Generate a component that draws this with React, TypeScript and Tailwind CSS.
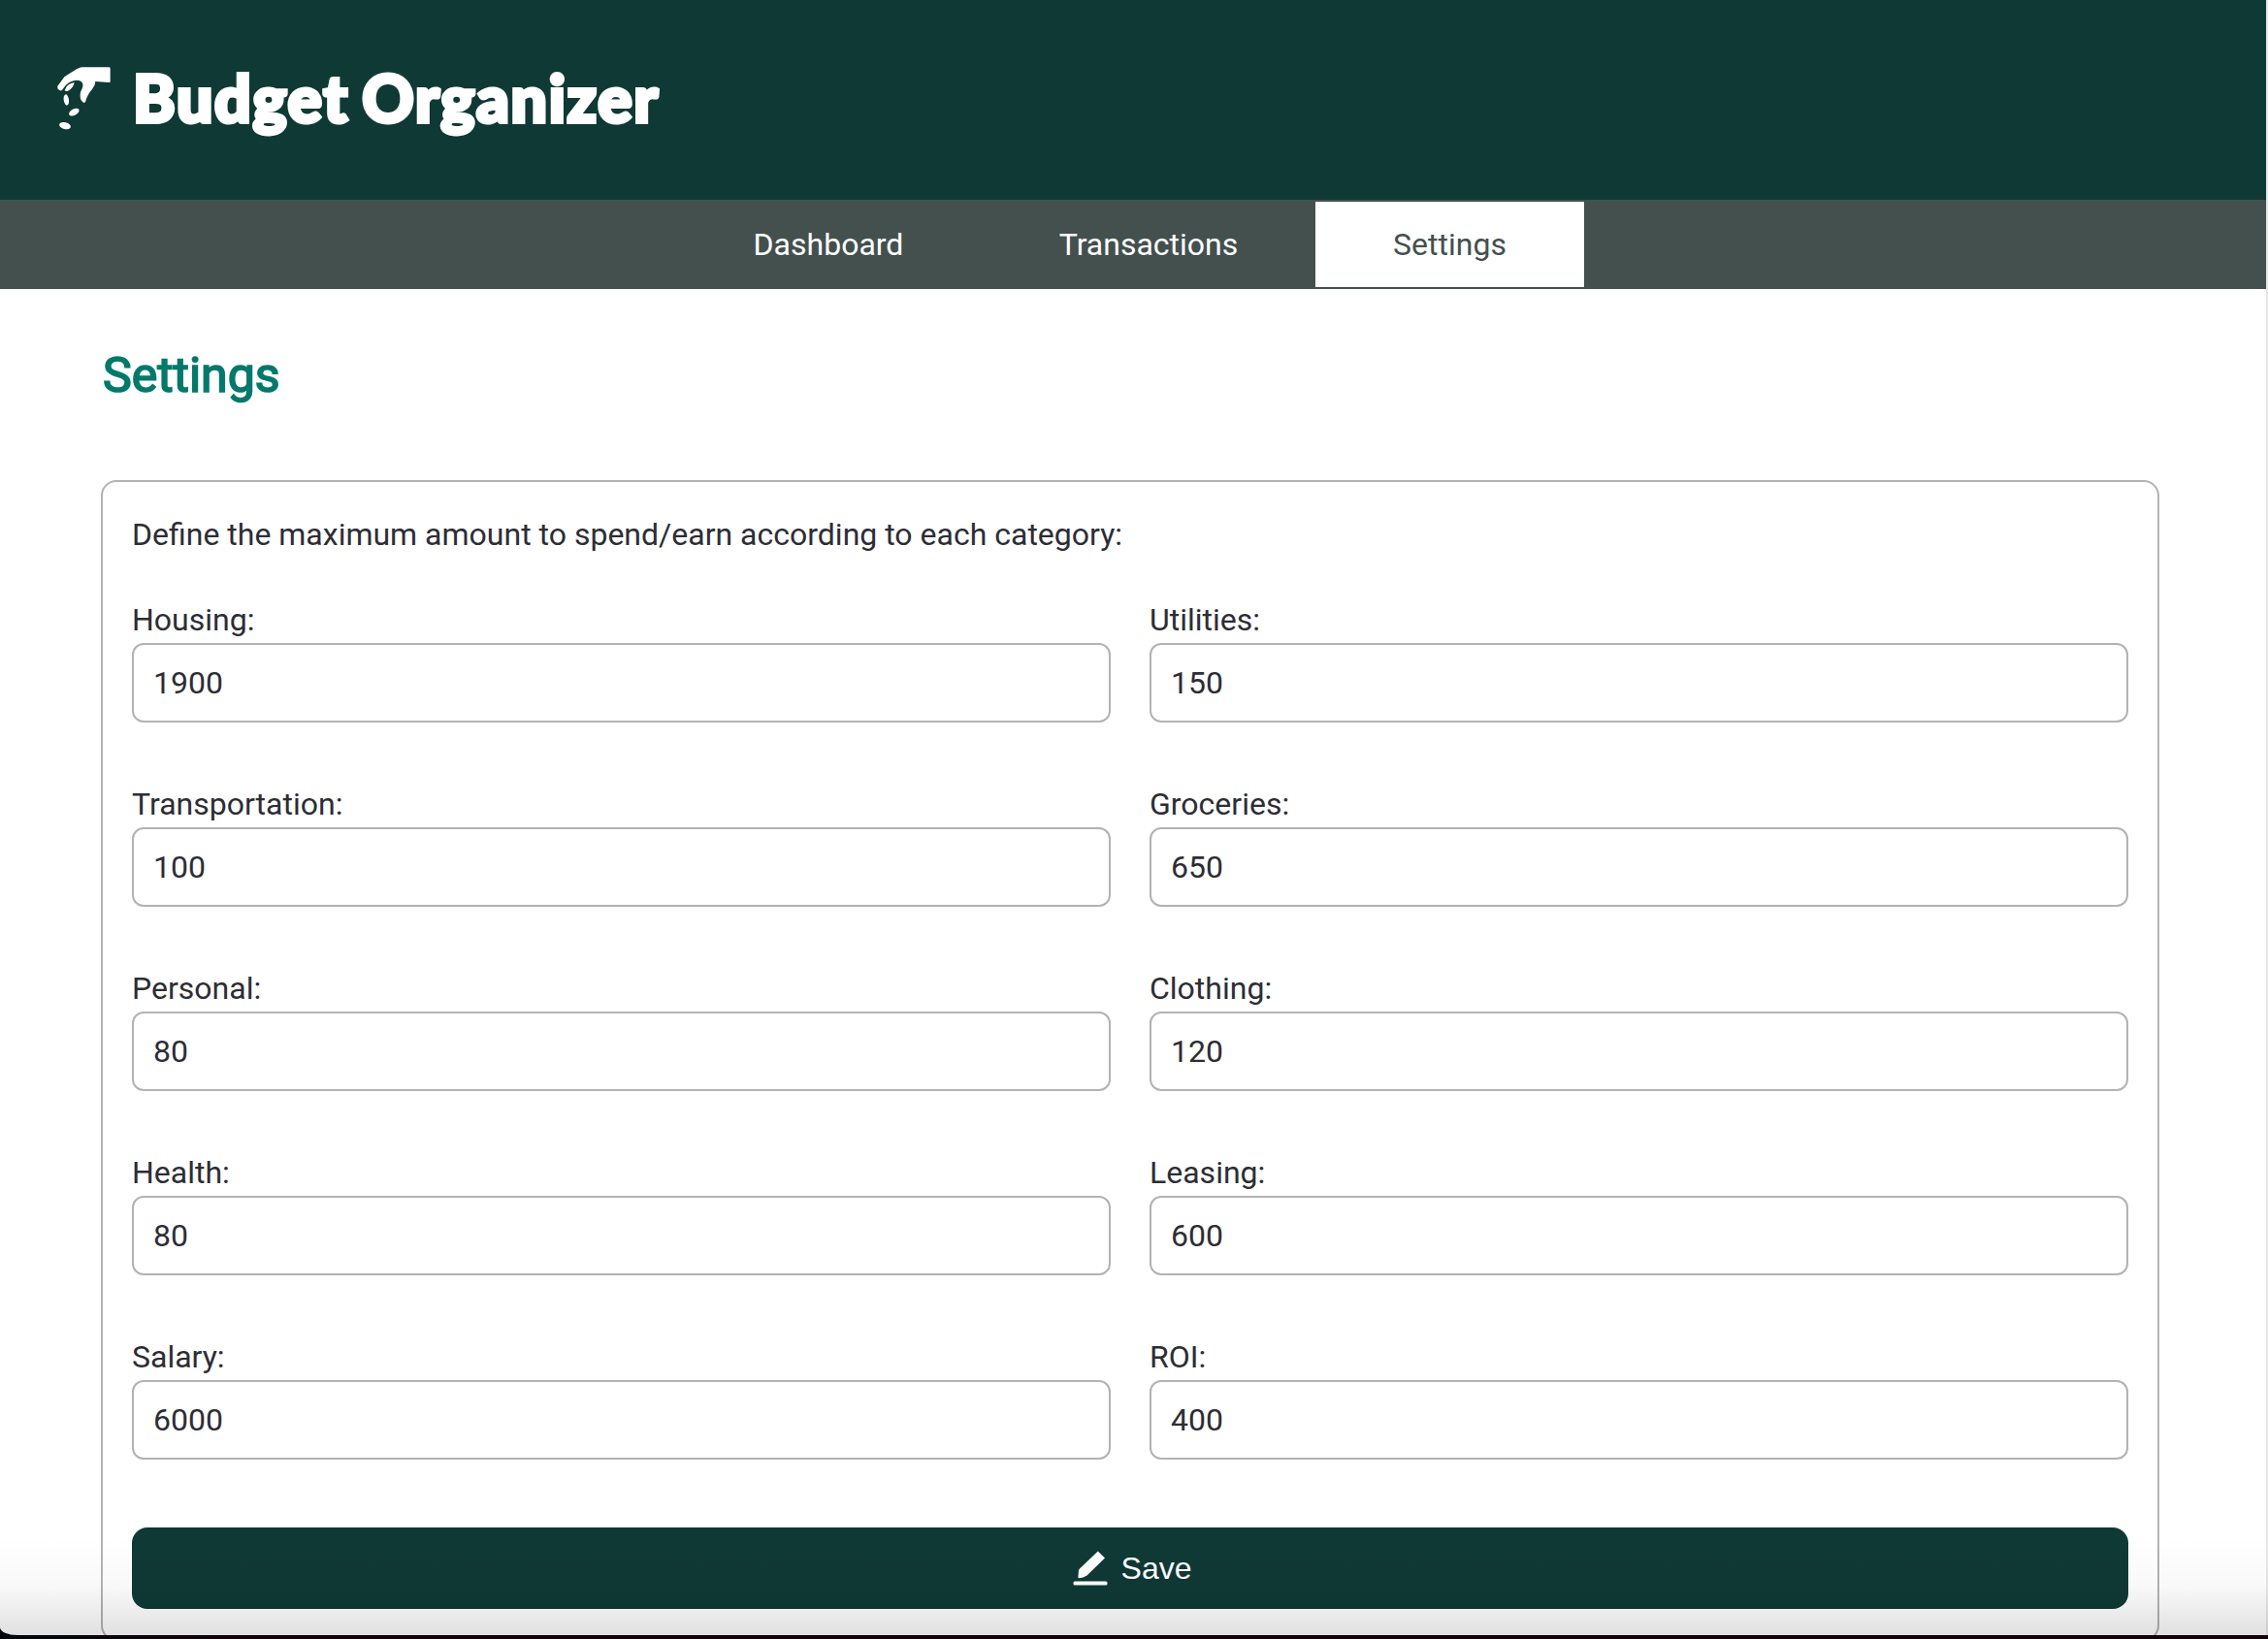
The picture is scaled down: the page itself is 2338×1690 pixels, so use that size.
import React from "react";

const tabs = [
  { label: "Dashboard", active: false, cls: "w-[316px]" },
  { label: "Transactions", active: false, cls: "w-[344px]" },
  { label: "Settings", active: true, cls: "w-[277px]" },
];

const fields: [string, string][] = [
  ["Housing", "1900"],
  ["Utilities", "150"],
  ["Transportation", "100"],
  ["Groceries", "650"],
  ["Personal", "80"],
  ["Clothing", "120"],
  ["Health", "80"],
  ["Leasing", "600"],
  ["Salary", "6000"],
  ["ROI", "400"],
];

function HandCoins() {
  return (
    <svg className="h-[66px] w-[56px] shrink-0" viewBox="0 0 168 198" fill="#fff">
      <path d="M75 1H160Q164 1 164 5V45Q164 49 160 48L118 45Q118 57 108 69Q92 87 87 109L82 111Q70 104 71 87Q71 77 77 67Q83 54 74 45Q64 39 50 43Q36 47 26 57L15 71Q8 77 1 67V59L22 31Q40 19 60 7Q68 2 75 1Z" />
      <path d="M53 48Q37 51 29 61L23 73Q27 77 33 74Q49 67 53 48Z" />
      <ellipse cx="28" cy="102" rx="8" ry="17" transform="rotate(-8 28 102)" />
      <ellipse cx="52" cy="140" rx="17" ry="9.5" transform="rotate(-27 52 140)" />
      <ellipse cx="24" cy="182" rx="18" ry="10.5" transform="rotate(13 24 182)" />
    </svg>
  );
}

function PencilLine() {
  return (
    <svg className="h-9 w-9 shrink-0" viewBox="0 0 36 36" fill="#fff">
      <path d="M25.8 0.5L33 7.5L14.5 25.6Q11 28.2 6.2 28.2Q5.3 28.2 5.4 27L6 20.2Q6.2 19.2 7 18.4Z" />
      <rect x="0.5" y="31.5" width="35" height="4" rx="1.5" />
    </svg>
  );
}

export default function App() {
  return (
    <div className="relative h-[1690px] w-[2338px] overflow-hidden bg-gradient-to-r from-[#00080e] via-[#14000a] via-10% to-[#14000a] font-['Roboto',sans-serif] text-[32px] leading-[38px] text-[#2d2d35]">
      <div className="h-[1686px] overflow-hidden rounded-bl-[18px_8px] bg-white">
        <header className="flex h-[206px] items-center bg-[#0f3935] pb-[2px] pl-[59px]">
          <div className="flex items-start gap-[22px]">
            <HandCoins />
            <h1 className="-mt-px whitespace-nowrap font-['Lato',sans-serif] text-[66px] font-black leading-[66px] tracking-[1.7px] text-white [-webkit-text-stroke:4px_#fff] [stroke-linejoin:round] [word-spacing:-4px]">
              Budget Organizer
            </h1>
          </div>
        </header>
        <nav className="flex h-[92px] items-center bg-[#44504e] py-0.5 pl-[696px]">
          {tabs.map((t) => (
            <a
              key={t.label}
              className={`flex h-full items-center justify-center ${t.cls} ${t.active ? "bg-white text-[#44504e]" : "text-white"}`}
            >
              {t.label}
            </a>
          ))}
        </nav>
        <main className="pl-[104px] pr-[112px] pt-[60px]">
          <h2 className="h-[137px] pl-[2px] text-[50px] font-normal leading-[58px] text-[#03796c] [-webkit-text-stroke:1.7px_#03796c]">
            Settings
          </h2>
          <section className="h-[1197px] rounded-2xl border-2 border-[#b3b3b3] px-[30px] pt-[35px]">
            <p>Define the maximum amount to spend/earn according to each category:</p>
            <div className="mt-[50px] grid grid-cols-2 gap-x-[40px] gap-y-[65px]">
              {fields.map(([label, value]) => (
                <label key={label} className="block h-[125px]">
                  <span className="mb-[5px] block">{label}:</span>
                  <input
                    defaultValue={value}
                    className="block h-[82px] w-full rounded-xl border-2 border-[#b3b3b3] bg-white px-5 outline-none"
                  />
                </label>
              ))}
            </div>
            <button className="mt-[70px] flex h-[84px] w-full items-center justify-center gap-[14px] rounded-2xl bg-[#0f3935] pl-[4px] font-['Liberation_Sans',sans-serif] text-white">
              <PencilLine />
              <span>Save</span>
            </button>
          </section>
        </main>
      </div>
      <div className="pointer-events-none absolute right-0 top-0 h-[1686px] w-[2px] bg-[#e6e6e6]" />
      <div className="pointer-events-none absolute bottom-1 left-0 h-[100px] w-full rounded-bl-[18px_8px] bg-gradient-to-b from-transparent via-black/[0.025] to-black/[0.12]" />
    </div>
  );
}
